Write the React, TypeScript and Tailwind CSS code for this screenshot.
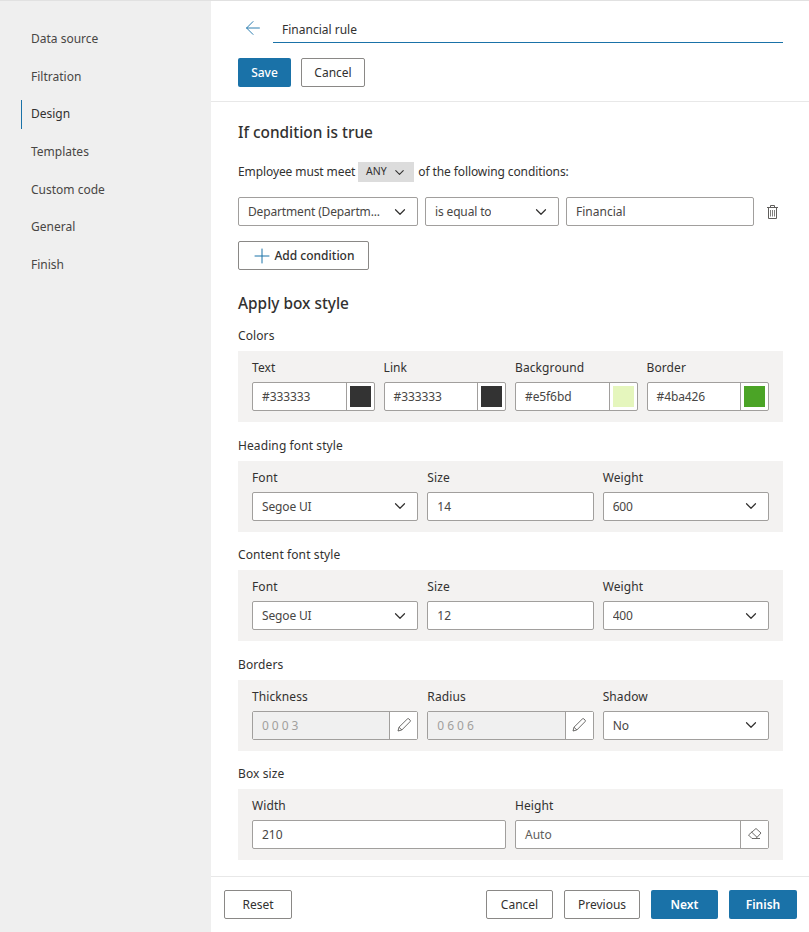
import React from 'react'
import { ChevronDown, Plus, ArrowLeft } from 'lucide-react'

const navItems = ['Data source', 'Filtration', 'Design', 'Templates', 'Custom code', 'General', 'Finish']

const field = 'h-[29px] border border-[#a19f9d] rounded-[2px] bg-white flex items-center text-[12px] text-[#484644]'

function Chevron() {
  return <ChevronDown size={18} strokeWidth={1.6} className="shrink-0 text-[#323130]" />
}

function Select({ value }: { value: string }) {
  return (
    <div className={`${field} pl-[9px] pr-[8px] justify-between min-w-0`}>
      <span className="truncate tracking-[-0.15px] pt-px">{value}</span>
      <Chevron />
    </div>
  )
}

function Input({ value }: { value: string }) {
  return <div className={`${field} px-[9px] pt-px`}>{value}</div>
}

function Labeled({ label, children }: { label: string; children: React.ReactNode }) {
  return (
    <div className="flex flex-col gap-[6px] min-w-0">
      <div className="h-[16px] leading-[16px] text-[12px] font-[450] tracking-[0.1px] text-[#323130]">{label}</div>
      {children}
    </div>
  )
}

function ColorField({ label, value, color }: { label: string; value: string; color: string }) {
  return (
    <Labeled label={label}>
      <div className={field}>
        <span className="flex-1 pl-[9px] pt-px min-w-0 tracking-[-0.1px]">{value}</span>
        <span className="w-[28px] h-full border-l border-[#a19f9d] flex items-center justify-center shrink-0">
          <span className="w-[21px] h-[21px] block" style={{ background: color }} />
        </span>
      </div>
    </Labeled>
  )
}

function IconField({ value, disabled, children }: { value: string; disabled?: boolean; children: React.ReactNode }) {
  return (
    <div className={field}>
      <span
        className={`flex-1 h-full flex items-center pl-[9px] pt-px min-w-0 ${
          disabled ? 'bg-[#f0f0f0] text-[#a19f9d] tracking-[3px]' : 'text-[#605e5c]'
        }`}
      >
        {value}
      </span>
      <span className="w-[28px] h-full border-l border-[#a19f9d] flex items-center justify-center shrink-0 bg-white">
        {children}
      </span>
    </div>
  )
}

function Panel({ title, cols, children }: { title: string; cols: string; children: React.ReactNode }) {
  return (
    <section className="mb-[15.5px]">
      <h3 className="h-[16px] leading-[16px] text-[12px] font-[450] tracking-[0.1px] text-[#323130] mb-[7px]">{title}</h3>
      <div className={`bg-[#f3f2f1] h-[71px] px-[14px] pt-[9px] grid gap-x-[9px] ${cols}`}>{children}</div>
    </section>
  )
}

function Button({
  children,
  primary,
  bold,
  className = '',
}: {
  children: React.ReactNode
  primary?: boolean
  bold?: boolean
  className?: string
}) {
  return (
    <button
      className={`h-[29px] rounded-[2px] text-[12px] flex items-center justify-center ${
        primary ? 'bg-[#1a72a8] text-white' : 'bg-white border border-[#8a8886] text-[#323130]'
      } ${bold ? 'font-semibold' : primary ? 'font-medium' : ''} ${className}`}
    >
      {children}
    </button>
  )
}

function TrashIcon() {
  return (
    <svg width="11" height="14" viewBox="0 0 11 14" fill="none" stroke="#605e5c" strokeWidth="1" className="ml-[6px] shrink-0">
      <path d="M3.5 2V.5h4V2" />
      <path d="M0 2.5h11" />
      <path d="M1.5 2.5v11h8v-11" />
      <path d="M3.5 5v6.5M5.5 5v6.5M7.5 5v6.5" strokeWidth="0.8" />
    </svg>
  )
}

function PencilIcon() {
  return (
    <svg width="16" height="16" viewBox="0 0 16 16" fill="none" stroke="#484644" strokeWidth="0.8">
      <path d="M2 14l1-3.8L11.3 2a1.2 1.2 0 0 1 1.7 0l1 1a1.2 1.2 0 0 1 0 1.7L5.8 13z" />
      <path d="M3 10.2L5.8 13" />
    </svg>
  )
}

function EraserIcon() {
  return (
    <svg width="15" height="15" viewBox="0 0 15 15" fill="none" stroke="#484644" strokeWidth="0.8">
      <path d="M9 1.5L14 6l-5 5.5H5L1.5 8z" />
      <path d="M4.5 5L10 10.3" />
      <path d="M9 11.5h4" />
    </svg>
  )
}

export default function App() {
  return (
    <div className="h-[932px] w-[809px] overflow-hidden flex border-t border-[#e1e1e1] bg-white font-['Noto_Sans',sans-serif]">
      <aside className="w-[211px] shrink-0 bg-[#efefef] pt-[19px] pl-[21px]">
        {navItems.map((item) => (
          <div key={item} className="h-[37.7px] flex items-center text-[12px]">
            {item === 'Design' ? (
              <div className="h-[29px] flex items-center border-l border-[#1a72a8] pl-[9px] text-[#323130] font-[450]">{item}</div>
            ) : (
              <div className="pl-[10px] text-[#484644]">{item}</div>
            )}
          </div>
        ))}
      </aside>

      <main className="flex-1 min-w-0 flex flex-col">
        <header className="h-[101px] shrink-0 border-b border-[#e8e8e8] pl-[27px] pr-[26px] pt-[13px]">
          <div className="flex items-start">
            <ArrowLeft size={22} strokeWidth={1} className="text-[#1a72a8] ml-[3.5px] mt-[3px] shrink-0" />
            <div className="ml-[9.5px] flex-1 h-[29px] border-b border-[#1a72a8] pl-[9px] pt-[3px] flex items-center text-[12px] text-[#323130] font-[450]">
              Financial rule
            </div>
          </div>
          <div className="flex gap-[10px] mt-[15px]">
            <Button primary className="w-[53px]">Save</Button>
            <Button className="w-[64px]">Cancel</Button>
          </div>
        </header>

        <div className="flex-1 min-h-0 pl-[27px] pr-[26px] pt-[20px]">
          <h2 className="h-[22px] leading-[22px] text-[15.4px] font-medium text-[#323130]">If condition is true</h2>

          <div className="flex items-center mt-[18px] h-[20px] text-[12px] text-[#323130]">
            <span className="tracking-[-0.1px]">Employee must meet</span>
            <span className="ml-[3px] w-[56px] h-[20px] bg-[#dcdcdc] flex items-center justify-center gap-[5px] text-[10.5px]">
              ANY <ChevronDown size={15} strokeWidth={1.7} />
            </span>
            <span className="ml-[4px] tracking-[-0.1px]">of the following conditions:</span>
          </div>

          <div className="flex items-center gap-[7px] mt-[15px]">
            <div className="w-[180px] shrink-0"><Select value="Department (Departm..." /></div>
            <div className="w-[134px] shrink-0"><Select value="is equal to" /></div>
            <div className="w-[188px] shrink-0"><Input value="Financial" /></div>
            <TrashIcon />
          </div>

          <Button className="w-[131px] mt-[15px] gap-[1px] pr-[3px] font-medium">
            <Plus size={24} strokeWidth={1} className="text-[#1a72a8] shrink-0" /> Add condition
          </Button>

          <h2 className="h-[22px] leading-[22px] text-[15.4px] font-medium text-[#323130] mt-[23px] mb-[13px]">Apply box style</h2>

          <Panel title="Colors" cols="grid-cols-4">
            <ColorField label="Text" value="#333333" color="#333333" />
            <ColorField label="Link" value="#333333" color="#333333" />
            <ColorField label="Background" value="#e5f6bd" color="#e5f6bd" />
            <ColorField label="Border" value="#4ba426" color="#4ba426" />
          </Panel>

          <Panel title="Heading font style" cols="grid-cols-3">
            <Labeled label="Font"><Select value="Segoe UI" /></Labeled>
            <Labeled label="Size"><Input value="14" /></Labeled>
            <Labeled label="Weight"><Select value="600" /></Labeled>
          </Panel>

          <Panel title="Content font style" cols="grid-cols-3">
            <Labeled label="Font"><Select value="Segoe UI" /></Labeled>
            <Labeled label="Size"><Input value="12" /></Labeled>
            <Labeled label="Weight"><Select value="400" /></Labeled>
          </Panel>

          <Panel title="Borders" cols="grid-cols-3">
            <Labeled label="Thickness">
              <IconField value="0003" disabled><PencilIcon /></IconField>
            </Labeled>
            <Labeled label="Radius">
              <IconField value="0606" disabled><PencilIcon /></IconField>
            </Labeled>
            <Labeled label="Shadow"><Select value="No" /></Labeled>
          </Panel>

          <Panel title="Box size" cols="grid-cols-2">
            <Labeled label="Width"><Input value="210" /></Labeled>
            <Labeled label="Height">
              <IconField value="Auto"><EraserIcon /></IconField>
            </Labeled>
          </Panel>
        </div>

        <footer className="h-[56px] shrink-0 border-t border-[#e8e8e8] flex items-start pt-[13px] pl-[13px] pr-[12px]">
          <Button className="w-[68px]">Reset</Button>
          <div className="flex-1" />
          <Button className="w-[67px] mr-[11px]">Cancel</Button>
          <Button className="w-[76px] mr-[11px]">Previous</Button>
          <Button primary bold className="w-[67px] mr-[11px]">Next</Button>
          <Button primary bold className="w-[68px]">Finish</Button>
        </footer>
      </main>
    </div>
  )
}
